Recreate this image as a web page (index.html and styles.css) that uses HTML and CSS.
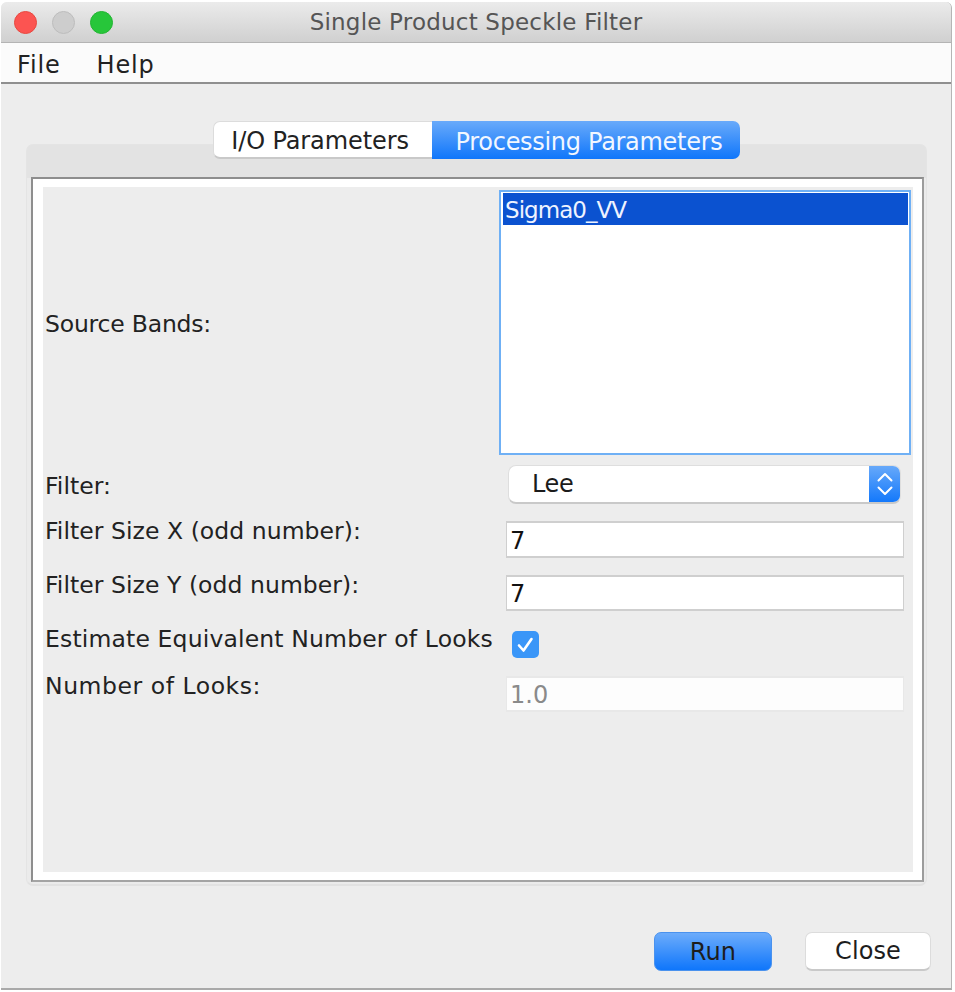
FILE: index.html
```html
<!DOCTYPE html>
<html lang="en">
<head>
<meta charset="utf-8">
<title>Single Product Speckle Filter</title>
<link rel="stylesheet" href="styles.css">
</head>
<body>
<div class="window">
  <header class="titlebar">
    <div class="lights">
      <span class="light red"></span>
      <span class="light grey"></span>
      <span class="light green"></span>
    </div>
    <div class="title">Single Product Speckle Filter</div>
  </header>
  <nav class="menubar">
    <span class="menu-item">File</span>
    <span class="menu-item">Help</span>
  </nav>
  <main class="content">
    <div class="tabs">
      <div class="tab tab-off">I/O Parameters</div>
      <div class="tab tab-on">Processing Parameters</div>
    </div>
    <section class="tabpane">
      <div class="frame">
        <div class="form">
          <div class="row row-list">
            <label class="label">Source Bands:</label>
            <div class="listbox"><div class="list-item">Sigma0_VV</div></div>
          </div>
          <div class="row row-select">
            <label class="label">Filter:</label>
            <div class="select">
              <span class="select-value">Lee</span>
              <span class="select-arrows">
                <svg width="16" height="24" viewBox="0 0 16 24" fill="none" stroke="#fff" stroke-width="2" stroke-linecap="round" stroke-linejoin="round"><path d="M1.5 8.5 8 2l6.5 6.5"/><path d="M1.5 15.5 8 22l6.5-6.5"/></svg>
              </span>
            </div>
          </div>
          <div class="row row-x">
            <label class="label label-high">Filter Size X (odd number):</label>
            <div class="input">7</div>
          </div>
          <div class="row row-y">
            <label class="label label-high">Filter Size Y (odd number):</label>
            <div class="input">7</div>
          </div>
          <div class="row row-check">
            <label class="label label-high">Estimate Equivalent Number of Looks</label>
            <span class="checkbox">
              <svg width="27" height="27" viewBox="0 0 27 27" fill="none" stroke="#fff" stroke-width="2.6" stroke-linecap="round" stroke-linejoin="round"><path d="M7 14.5l4.5 5L19.5 8"/></svg>
            </span>
          </div>
          <div class="row row-looks">
            <label class="label label-high">Number of Looks:</label>
            <div class="input input-off">1.0</div>
          </div>
        </div>
      </div>
    </section>
    <div class="actions">
      <button class="btn btn-run" type="button">Run</button>
      <button class="btn btn-close" type="button">Close</button>
    </div>
  </main>
</div>
</body>
</html>
```
FILE: styles.css
```css
* { box-sizing: border-box; }
html, body { margin: 0; padding: 0; background: #fff; }
body {
  width: 955px;
  height: 992px;
  overflow: hidden;
  padding: 2px 3px 2px 1px;
  font-family: "DejaVu Sans", "Liberation Sans", sans-serif;
  color: #1b1b1b;
}
.window {
  height: 988px;
  background: #ededed;
  border-right: 1px solid #b5b5b5;
  border-bottom: 2px solid #a9a9a9;
  border-radius: 6px 6px 0 0;
  display: flex;
  flex-direction: column;
}
.titlebar {
  height: 41px;
  flex: none;
  background: linear-gradient(#ebebeb, #d0d0d0);
  border-bottom: 1px solid #b4b4b4;
  border-radius: 6px 6px 0 0;
  display: flex;
  align-items: center;
  justify-content: center;
  position: relative;
}
.lights {
  position: absolute;
  left: 13px;
  top: 9px;
  display: flex;
  gap: 15px;
}
.light { width: 23px; height: 23px; border-radius: 50%; }
.red { background: #fc5451; border: 1px solid #e8483f; }
.grey { background: #cdcdcd; border: 1px solid #bdbdbd; }
.green { background: #27c63a; border: 1px solid #22b532; }
.title {
  font-size: 23px;
  letter-spacing: 0.2px;
  color: #555;
  padding-right: 0;
  margin-top: -1px;
}
.menubar {
  height: 41px;
  flex: none;
  background: #fbfbfb;
  border-bottom: 2px solid #8f8f8f;
  display: flex;
  align-items: center;
  gap: 36px;
  padding: 5px 0 0 16px;
  font-size: 24px;
  letter-spacing: 0.85px;
  color: #222;
}
.content {
  flex: 1;
  display: flex;
  flex-direction: column;
  padding: 37px 25px 0;
}
.tabs {
  display: flex;
  justify-content: center;
  height: 38px;
  margin-bottom: -15px;
  padding-left: 1px;
  position: relative;
  z-index: 1;
  font-size: 24px;
}
.tab {
  display: flex;
  align-items: center;
  justify-content: center;
  padding-top: 3px;
}
.tab-off {
  width: 219px;
  background: #fff;
  border: 1px solid #dcdcdc;
  border-right: 0;
  border-bottom: 2px solid #c9c9c9;
  border-radius: 7px 0 0 7px;
  color: #222;
  letter-spacing: -0.1px;
  padding-right: 6px;
}
.tab-on {
  width: 308px;
  background: linear-gradient(#69aafa, #0f76fb);
  border-radius: 0 7px 7px 0;
  color: #f2f7ff;
  letter-spacing: -0.3px;
  padding-left: 6px;
}
.tabpane {
  height: 742px;
  flex: none;
  background: linear-gradient(#e3e3e3 0, #e3e3e3 33px, #ebebeb 33px);
  border: 1px solid #e4e4e4;
  border-bottom: 2px solid #e2e2e2;
  border-radius: 7px;
  padding: 32px 3px 3px 4px;
  margin-right: -1px;
}
.frame {
  height: 705px;
  width: 893px;
  background: #fff;
  border: 2px solid #8e8e8e;
  border-right-color: #9c9c9c;
  border-bottom-color: #a4a4a4;
  padding: 8px 9px 8px 10px;
}
.form {
  height: 685px;
  width: 870px;
  background: #ededed;
  display: flex;
  flex-direction: column;
  padding-left: 2px;
}
.row { display: flex; align-items: center; flex: none; }
.label {
  font-size: 23.5px;
  letter-spacing: 0.05px;
  color: #222;
  white-space: nowrap;
}
.label-high { align-self: flex-start; }
.row-list { height: 264px; margin-top: 3px; }
.row-list > .label { width: 454px; padding-top: 4px; letter-spacing: -0.2px; }
.row-select > .label { width: 463px; padding-top: 3px; }
.row-x > .label, .row-y > .label, .row-looks > .label, .row-check > .label { width: 461px; }
.row-check > .label { letter-spacing: 0.15px; }
.row-looks > .label { letter-spacing: 0.55px; }
.listbox {
  width: 412px;
  height: 265px;
  background: #fff;
  border: 2px solid #6fb0f5;
  padding: 1px 2px;
}
.list-item {
  height: 32px;
  width: 405px;
  background: #0b52d0;
  color: #eef3ff;
  font-size: 23px;
  letter-spacing: -0.95px;
  padding: 3px 0 0 2px;
  display: flex;
  align-items: center;
}
.row-select { height: 39px; margin-top: 11px; }
.select {
  width: 393px;
  height: 39px;
  background: #fff;
  border: 1px solid #dedede;
  border-bottom: 2px solid #c9c9c9;
  border-radius: 8px;
  display: flex;
  align-items: center;
  justify-content: space-between;
  overflow: hidden;
  font-size: 24px;
  letter-spacing: -0.4px;
}
.select-value { padding-left: 23px; }
.select-arrows {
  width: 31px;
  height: 39px;
  background: linear-gradient(#69aafa, #0f76fb);
  display: flex;
  align-items: center;
  justify-content: center;
  flex: none;
}
.row-x { height: 37px; margin-top: 17px; }
.row-y { height: 36px; margin-top: 17px; }
.row-check { height: 27px; margin-top: 20px; }
.row-looks { height: 36px; margin-top: 18px; }
.row-x .label { margin-top: -4px; }
.row-y .label { margin-top: -4px; }
.row-check .label { margin-top: -6px; }
.row-looks .label { margin-top: -4px; }
.input {
  width: 398px;
  height: 100%;
  background: #fff;
  border: 1px solid #cfcfcf;
  border-top-width: 2px;
  border-bottom-width: 2px;
  font-size: 24px;
  color: #111;
  padding: 2px 0 0 3px;
  display: flex;
  align-items: center;
}
.input-off {
  border-color: #e8e8e8;
  color: #8a8a8a;
  background: #fdfdfd;
}
.checkbox {
  width: 27px;
  height: 27px;
  margin-left: 6px;
  border-radius: 5px;
  background: #3a96f8;
  display: block;
}
.actions {
  display: flex;
  justify-content: flex-end;
  gap: 33px;
  margin-top: 46px;
  margin-right: -5px;
}
.btn {
  height: 39px;
  font-family: inherit;
  font-size: 24px;
  letter-spacing: 0.1px;
  color: #1d1d1d;
  border-radius: 7px;
  padding: 0;
}
.btn-run {
  width: 118px;
  background: linear-gradient(#6cacfb, #0f76fb);
  border: 1px solid #4a92ee;
}
.btn-close {
  width: 126px;
  background: #fff;
  border: 1px solid #dcdcdc;
  border-bottom: 2px solid #c9c9c9;
}
```
